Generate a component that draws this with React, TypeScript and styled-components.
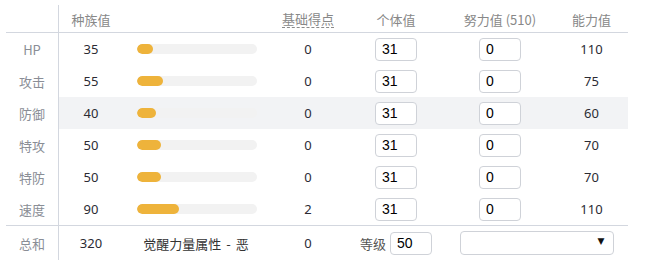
import styled, { createGlobalStyle } from "styled-components";

const GlobalStyle = createGlobalStyle`
  body {
    margin: 0;
    background: #fff;
    font-family: "Noto Sans CJK SC", "Noto Sans", sans-serif;
  }
`;

const COLS = "53px 64px 146px 78px 98px 110px 73px";
const MAX_STAT = 255;

const Table = styled.div`
  margin: 5px 0 0 6px;
  width: 622px;
`;

const Row = styled.div<{ $shade?: boolean; $kind?: "head" | "body" | "total" }>`
  display: grid;
  grid-template-columns: ${COLS};
  height: ${(p) => (p.$kind === "head" ? "27px" : p.$kind === "total" ? "34px" : "32px")};
  background: ${(p) => (p.$shade ? "#f2f3f5" : "#fff")};
  border-bottom: ${(p) => (p.$kind === "head" ? "1px solid #d3d7df" : "none")};
  border-top: ${(p) => (p.$kind === "total" ? "1px solid #d3d7df" : "none")};
`;

const Cell = styled.div<{ $span?: number }>`
  display: flex;
  align-items: center;
  justify-content: center;
  grid-column: span ${(p) => p.$span ?? 1};
  font-size: 13px;
  color: #333;
`;

const Label = styled(Cell)`
  background: #fff;
  border-right: 1px solid #d3d7df;
  color: #8a8e96;
`;

const Head = styled(Cell)`
  color: #888;
  padding-top: 2px;
`;

const Dotted = styled.span`
  display: inline-block;
  border-bottom: 1px dashed #8a8a8a;
  line-height: 16px;
`;

const Num = styled.span`
  font-family: "Noto Sans", sans-serif;
  font-size: 13px;
  color: #2b2b33;
`;

const BarCell = styled(Cell)`
  justify-content: flex-start;
  padding-left: 14px;
`;

const Track = styled.div`
  width: 120px;
  height: 10px;
  border-radius: 5px;
  background: #f2f2f2;
  overflow: hidden;
`;

const Fill = styled.div`
  height: 100%;
  border-radius: 5px;
  background: #eeb33b;
`;

const Input = styled.input`
  box-sizing: border-box;
  width: 42px;
  height: 23px;
  border: 1px solid #cfd2d8;
  border-radius: 4px;
  padding: 0 6px;
  font-family: "Liberation Sans", Arial, sans-serif;
  font-size: 14px;
  color: #000;
  background: #fff;
  outline: none;
`;

const LevelText = styled.span`
  color: #555;
  font-size: 13px;
  margin-right: 4px;
`;

const Awaken = styled.span`
  word-spacing: 2px;
`;

const SelectBox = styled.div`
  position: relative;
  box-sizing: border-box;
  width: 154px;
  height: 24px;
  border: 1px solid #cfd2d8;
  border-radius: 4px;
  background: #fff;
`;

const Arrow = styled.span`
  position: absolute;
  right: 8px;
  top: 4px;
  font-family: "DejaVu Sans", sans-serif;
  font-size: 9px;
  color: #111;
`;

const stats = [
  { name: "HP", base: 35, pts: 0, total: 110 },
  { name: "攻击", base: 55, pts: 0, total: 75 },
  { name: "防御", base: 40, pts: 0, total: 60, shade: true },
  { name: "特攻", base: 50, pts: 0, total: 70 },
  { name: "特防", base: 50, pts: 0, total: 70 },
  { name: "速度", base: 90, pts: 2, total: 110 },
];

export default function App() {
  return (
    <>
      <GlobalStyle />
      <Table>
        <Row $kind="head">
          <Label />
          <Head>种族值</Head>
          <Head />
          <Head>
            <Dotted>基础得点</Dotted>
          </Head>
          <Head>个体值</Head>
          <Head>努力值 (510)</Head>
          <Head>能力值</Head>
        </Row>
        {stats.map((s) => (
          <Row key={s.name} $kind="body" $shade={s.shade}>
            <Label>{s.name}</Label>
            <Cell>
              <Num>{s.base}</Num>
            </Cell>
            <BarCell>
              <Track>
                <Fill style={{ width: `${(s.base / MAX_STAT) * 120}px` }} />
              </Track>
            </BarCell>
            <Cell>
              <Num>{s.pts}</Num>
            </Cell>
            <Cell>
              <Input defaultValue="31" />
            </Cell>
            <Cell>
              <Input defaultValue="0" />
            </Cell>
            <Cell>
              <Num>{s.total}</Num>
            </Cell>
          </Row>
        ))}
        <Row $kind="total">
          <Label>总和</Label>
          <Cell>
            <Num>320</Num>
          </Cell>
          <Cell>
            <Awaken>觉醒力量属性 - 恶</Awaken>
          </Cell>
          <Cell>
            <Num>0</Num>
          </Cell>
          <Cell>
            <LevelText>等级</LevelText>
            <Input defaultValue="50" />
          </Cell>
          <Cell $span={2}>
            <SelectBox>
              <Arrow>▼</Arrow>
            </SelectBox>
          </Cell>
        </Row>
      </Table>
    </>
  );
}
